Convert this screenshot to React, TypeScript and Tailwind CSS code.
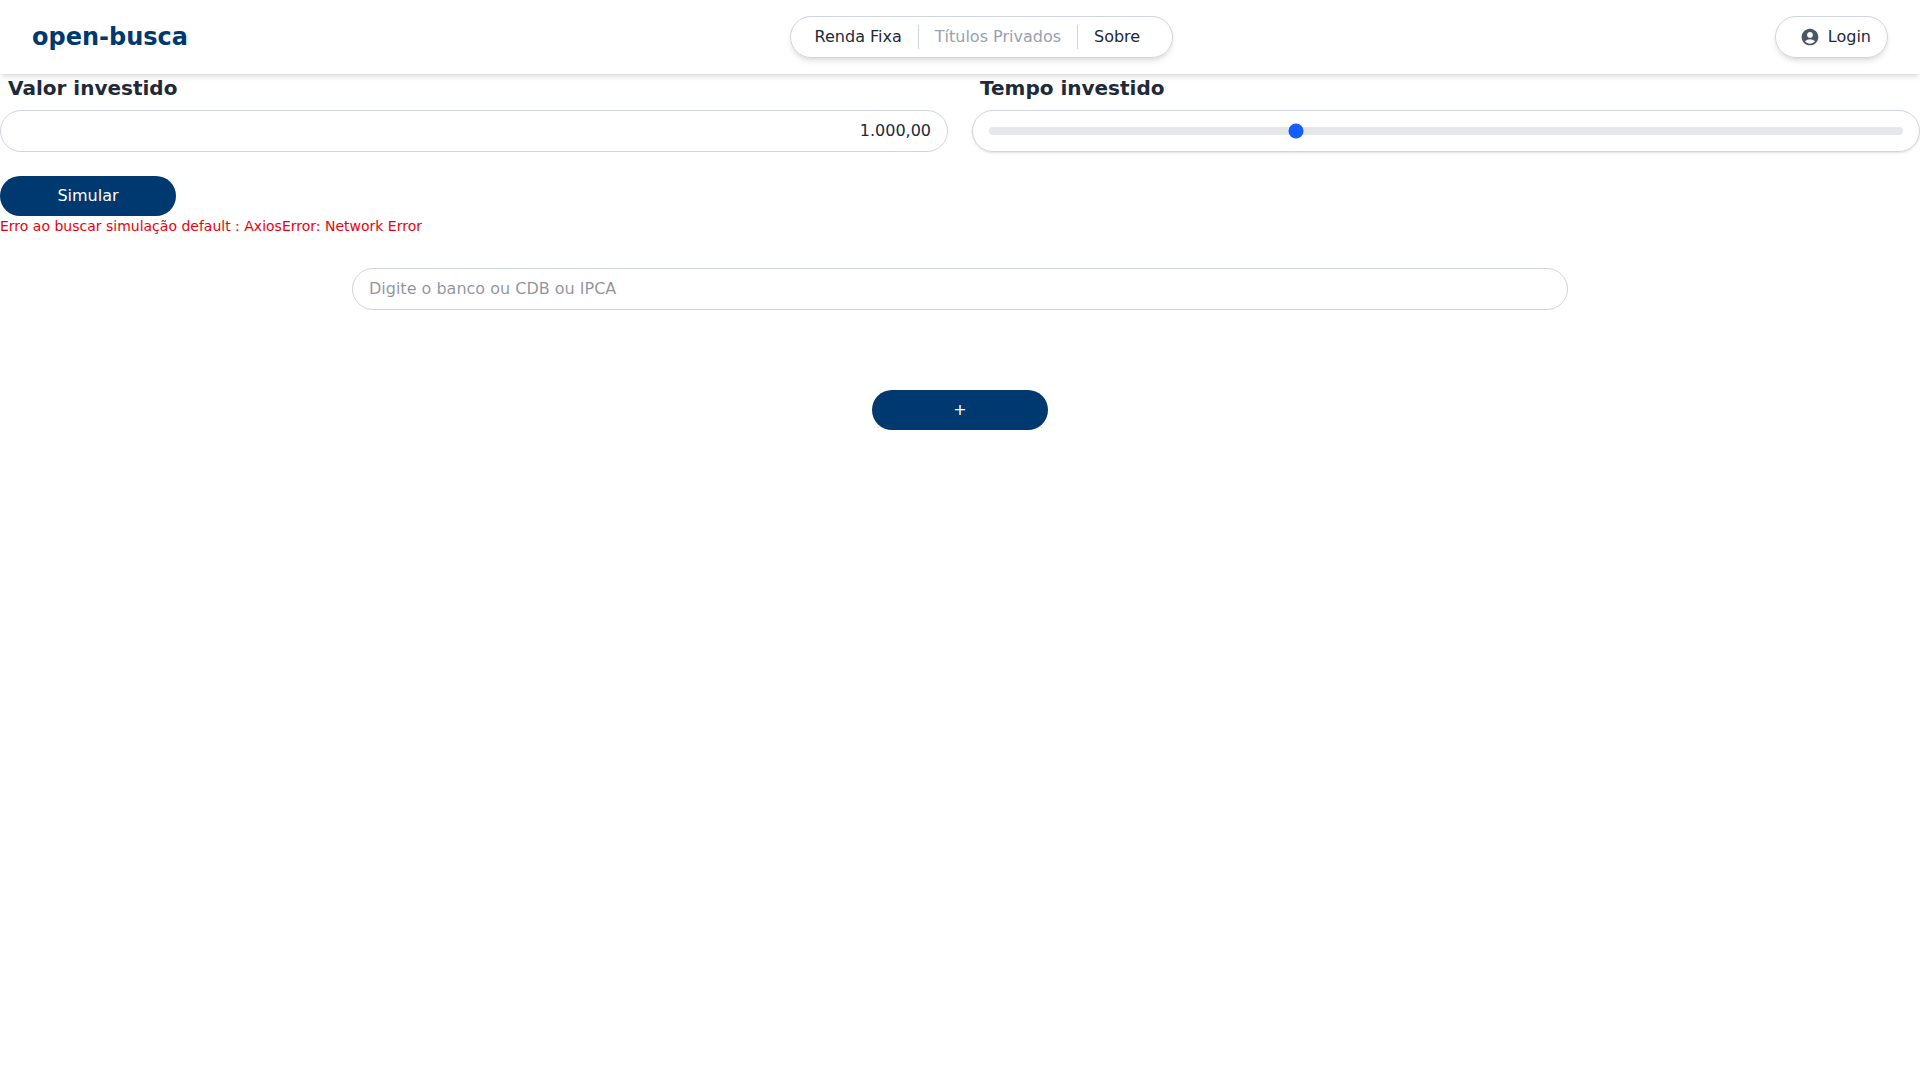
import { MdAccountCircle } from "react-icons/md";

export default function App() {
  return (
    <div className="min-h-screen bg-white font-['DejaVu_Sans',sans-serif] text-base text-gray-800">
      <header className="flex items-center justify-between bg-white px-8 py-4 shadow-md">
        <a href="#" className="text-2xl font-bold text-[#003870]">open-busca</a>
        <nav className="flex items-center rounded-full border border-gray-300 px-2 py-2 shadow-md">
          <a href="#" className="px-4">Renda Fixa</a>
          <span className="border-x border-gray-300 px-4 text-gray-400">Títulos Privados</span>
          <a href="#" className="pr-6 pl-4">Sobre</a>
        </nav>
        <button type="button" className="flex items-center gap-2 rounded-full border border-gray-300 py-2 pr-4 pl-6 shadow-md">
          <MdAccountCircle className="size-5 text-gray-600" />
          Login
        </button>
      </header>
      <main>
        <form className="grid grid-cols-2 gap-x-6">
          <div>
            <label htmlFor="valor" className="block px-2 text-xl font-bold">Valor investido</label>
            <input id="valor" type="text" defaultValue="1.000,00" className="mt-2 block w-full rounded-full border border-gray-300 px-4 py-2 text-right" />
          </div>
          <div>
            <label htmlFor="tempo" className="block px-2 text-xl font-bold">Tempo investido</label>
            <div className="mt-2 flex h-[42px] items-center rounded-full border border-gray-300 px-4 shadow-sm">
              <input id="tempo" type="range" min="0" max="36" defaultValue="12" className="h-2 w-full appearance-none rounded-lg bg-gray-200 accent-blue-600" />
            </div>
          </div>
          <button type="button" className="mt-6 w-44 rounded-full bg-[#003870] py-2 text-white">Simular</button>
        </form>
        <p className="text-sm text-red-600">Erro ao buscar simulação default : AxiosError: Network Error</p>
        <section className="mt-8 flex flex-col items-center px-88">
          <input type="text" aria-label="Buscar" placeholder="Digite o banco ou CDB ou IPCA" className="w-full rounded-full border border-gray-300 px-4 py-2 placeholder:text-gray-800/50" />
          <button type="button" className="mt-20 w-44 rounded-full bg-[#003870] py-2 text-white">+</button>
        </section>
      </main>
    </div>
  );
}
